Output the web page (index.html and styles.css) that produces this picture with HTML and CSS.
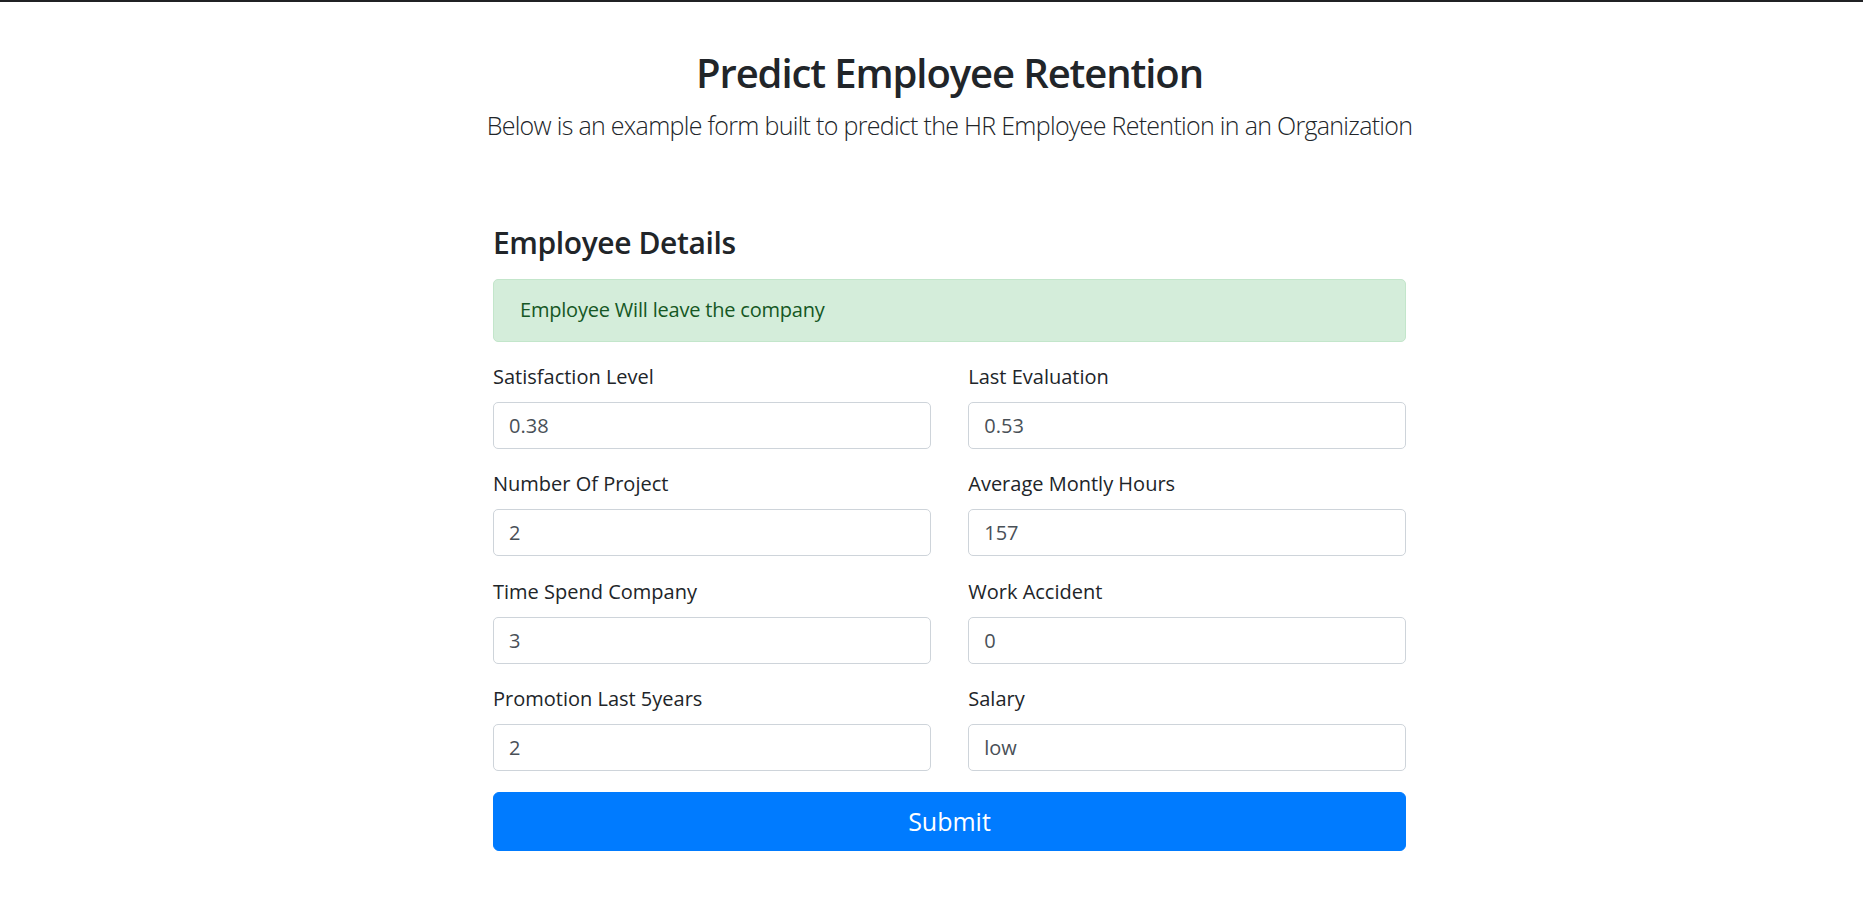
FILE: index.html
```html
<!DOCTYPE html>
<html lang="en">
<head>
<meta charset="utf-8">
<title>Predict Employee Retention</title>
<link rel="stylesheet" href="styles.css">
</head>
<body>
<div class="topbar"></div>
<div class="page">
  <header class="header">
    <h2 class="title">Predict Employee Retention</h2>
    <p class="lead">Below is an example form built to predict the HR Employee Retention in an Organization</p>
  </header>
  <main class="content">
    <h4 class="section-title">Employee Details</h4>
    <div class="alert">Employee Will leave the company</div>
    <form class="form">
      <div class="grid">
        <div class="field"><label class="label">Satisfaction Level</label><input class="input" type="text" value="0.38"></div>
        <div class="field"><label class="label">Last Evaluation</label><input class="input" type="text" value="0.53"></div>
        <div class="field"><label class="label">Number Of Project</label><input class="input" type="text" value="2"></div>
        <div class="field"><label class="label">Average Montly Hours</label><input class="input" type="text" value="157"></div>
        <div class="field"><label class="label">Time Spend Company</label><input class="input" type="text" value="3"></div>
        <div class="field"><label class="label">Work Accident</label><input class="input" type="text" value="0"></div>
        <div class="field"><label class="label">Promotion Last 5years</label><input class="input" type="text" value="2"></div>
        <div class="field"><label class="label">Salary</label><input class="input" type="text" value="low"></div>
      </div>
      <button class="submit" type="button">Submit</button>
    </form>
  </main>
</div>
</body>
</html>
```
FILE: styles.css
```css
* { box-sizing: border-box; }
html, body { margin: 0; padding: 0; background: #fff; }
body {
  font-family: "Open Sans", "Noto Sans", "Liberation Sans", sans-serif;
  color: #212529;
  font-size: 20px;
  line-height: 30px;
}
.topbar { height: 2px; background: #202124; }
.page { padding-left: 36px; }
.header {
  max-width: 1425px;
  margin: 0 auto;
  padding-top: 47px;
  padding-bottom: 60px;
  text-align: center;
}
.title {
  margin: 0 0 10px;
  font-size: 40px;
  line-height: 48px;
  font-weight: 600;
  letter-spacing: -1.1px;
}
.lead {
  margin: 0 0 20px;
  font-size: 25px;
  line-height: 37.5px;
  font-weight: 300;
  letter-spacing: -0.7px;
}
.content {
  width: 913px;
  margin: 0 auto;
}
.section-title {
  margin: 0 0 18px;
  font-size: 30px;
  line-height: 36px;
  font-weight: 600;
  letter-spacing: -0.4px;
}
.alert {
  background: #d4edda;
  border: 1px solid #c3e6cb;
  color: #155724;
  border-radius: 5px;
  padding: 15px 26px;
  height: 63px;
  margin-bottom: 20px;
  letter-spacing: -0.2px;
}
.grid {
  display: grid;
  grid-template-columns: 1fr 1fr;
  column-gap: 37.5px;
}
.field { margin-bottom: 20.5px; }
.label { display: block; margin-bottom: 10px; }
.input {
  display: block;
  width: 100%;
  height: 47px;
  padding: 0 15px;
  font-family: inherit;
  font-size: 20px;
  color: #495057;
  background: #fff;
  border: 1px solid #ced4da;
  border-radius: 5px;
  outline: none;
}
.submit {
  display: block;
  width: 100%;
  height: 59px;
  font-family: inherit;
  font-size: 25px;
  color: #fff;
  background: #007bff;
  border: 1px solid #007bff;
  border-radius: 6px;
  padding: 0;
}
```
